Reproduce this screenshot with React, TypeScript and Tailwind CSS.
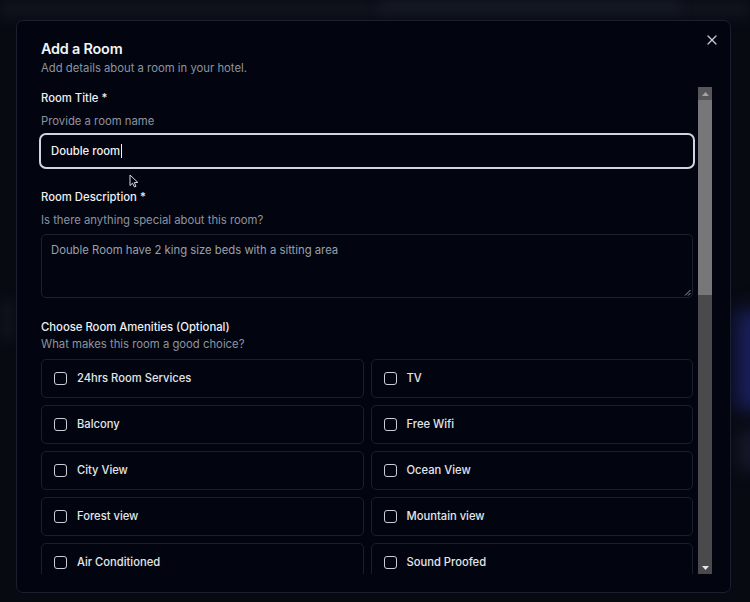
import { X } from "lucide-react";

const amenities = [
  "24hrs Room Services",
  "TV",
  "Balcony",
  "Free Wifi",
  "City View",
  "Ocean View",
  "Forest view",
  "Mountain view",
  "Air Conditioned",
  "Sound Proofed",
];

function Checkbox() {
  return <span className="w-[13px] h-[13px] rounded-[3px] border border-[#c9ced8] shrink-0" />;
}

export default function App() {
  return (
    <div
      className="relative w-[750px] h-[602px] overflow-hidden bg-[#080a12] text-[#e8ebf0]"
      style={{ fontFamily: "Inter, 'Noto Sans', sans-serif" }}
    >
      {/* blurred page behind the overlay */}
      <div className="absolute left-0 top-0 w-[750px] h-[18px] bg-[#10131d] blur-[6px]" />
      <div className="absolute left-[380px] top-[2px] w-[300px] h-[10px] bg-[#171b27] blur-[6px]" />
      <div className="absolute left-[736px] top-[310px] w-[40px] h-[100px] bg-[#1a1f5c] blur-[10px]" />
      <div className="absolute left-[738px] top-[430px] w-[30px] h-[40px] bg-[#151829] blur-[8px]" />
      <div className="absolute left-0 top-[300px] w-[14px] h-[40px] bg-[#10131c] blur-[6px]" />

      {/* dialog */}
      <div className="absolute left-[16px] top-[20px] w-[715px] h-[573px] rounded-[7px] border border-[#1b2030] bg-[#02050f] pl-[22px] pr-[18px] pt-[18px] flex flex-col">
        <button className="absolute right-[10px] top-[11px] text-[#c6cbd4]">
          <X size={16} strokeWidth={1.8} />
        </button>

        <div className="pl-[2px]">
          <h2 className="text-[14.4px] leading-[20px] font-semibold text-[#f3f5f8] tracking-[-0.2px]">Add a Room</h2>
          <p className="mt-[1px] text-[11.3px] leading-[16px] text-[#8c93a0]">
            Add details about a room in your hotel.
          </p>
        </div>

        <div className="mt-[11px] flex h-[487px]">
          <div className="relative w-[656px] px-[2px] overflow-hidden">
            <div className="pt-[3px] text-[11.3px] leading-[16px] font-medium text-[#eef0f4]">Room Title *</div>
            <div className="mt-[7px] text-[11.3px] leading-[16px] text-[#8c93a0]">Provide a room name</div>
            <div className="mt-[4px] -mx-[2px] h-[36px] rounded-[7px] border-2 border-[#d0d5de] flex items-center pl-[10px] text-[11.3px] font-medium text-[#f1f3f6]">
              Double room
              <span className="ml-[1px] w-px h-[14px] bg-[#f1f3f6]" />
            </div>

            <div className="mt-[20px] text-[11.3px] leading-[16px] font-medium text-[#eef0f4]">Room Description *</div>
            <div className="mt-[7px] text-[11.3px] leading-[16px] text-[#8c93a0]">
              Is there anything special about this room?
            </div>
            <div className="relative mt-[6px] h-[64px] rounded-[5px] border border-[#1c2130] pl-[9px] pt-[7px] text-[11.3px] leading-[16px] text-[#9aa0ab]">
              Double Room have 2 king size beds with a sitting area
              <svg className="absolute right-[1px] bottom-[1px]" width="7" height="7" viewBox="0 0 7 7">
                <path d="M6.5 1 L1 6.5 M6.5 4 L4 6.5" stroke="#9aa0ab" strokeWidth="1" />
              </svg>
            </div>

            <div className="mt-[21px] text-[11.3px] leading-[16px] font-medium text-[#eef0f4]">
              Choose Room Amenities (Optional)
            </div>
            <div className="mt-[1px] text-[11.3px] leading-[16px] text-[#8c93a0]">What makes this room a good choice?</div>

            <div className="mt-[7px] grid grid-cols-2 gap-[7px]">
              {amenities.map((a) => (
                <div
                  key={a}
                  className="h-[39px] rounded-[5px] border border-[#1a1f2d] flex items-center pl-[12px] gap-[10px] text-[11.2px] font-medium text-[#e3e6eb]"
                >
                  <Checkbox />
                  {a}
                </div>
              ))}
            </div>

            {/* mouse pointer */}
            <svg className="absolute left-[90px] top-[87px]" width="10" height="14" viewBox="0 0 10 14">
              <path
                d="M1 1 L1 11.5 L3.6 9.2 L5.4 13 L7 12.3 L5.3 8.6 L8.8 8.4 Z"
                fill="#02050f"
                stroke="#d6dae1"
                strokeWidth="1"
                strokeLinejoin="round"
              />
            </svg>
          </div>

          {/* scrollbar */}
          <div className="ml-[3px] w-[14px] h-[487px] bg-[#4a4a4c] flex flex-col">
            <div className="h-[13px] bg-[#575759] flex items-center justify-center">
              <svg width="7" height="4" viewBox="0 0 7 4">
                <path d="M0 4 L3.5 0 L7 4 Z" fill="#a3a3a6" />
              </svg>
            </div>
            <div className="h-[195px] bg-[#777779]" />
            <div className="flex-1" />
            <div className="h-[13px] flex items-center justify-center">
              <svg width="7" height="4" viewBox="0 0 7 4">
                <path d="M0 0 L7 0 L3.5 4 Z" fill="#e6e6e8" />
              </svg>
            </div>
          </div>
        </div>
      </div>
    </div>
  );
}
